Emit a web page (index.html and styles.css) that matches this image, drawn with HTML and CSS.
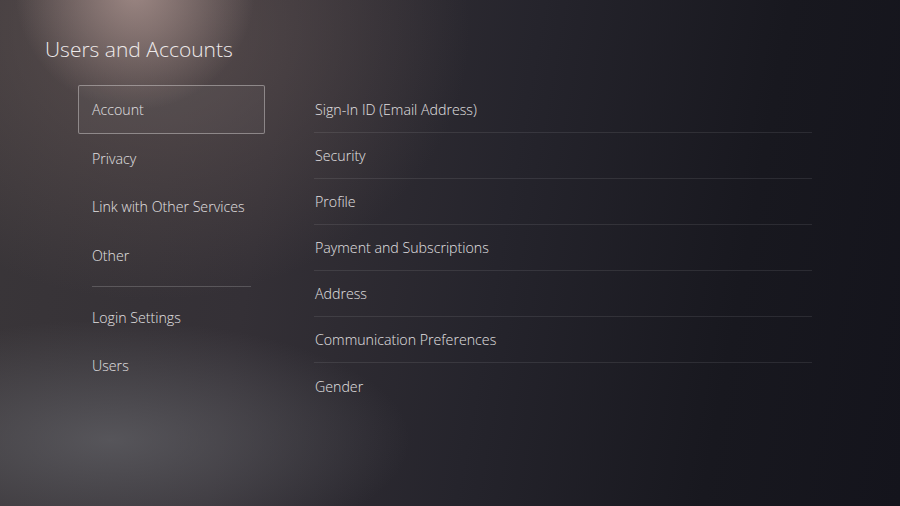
FILE: index.html
```html
<!DOCTYPE html>
<html lang="en">
<head>
<meta charset="utf-8">
<title>Users and Accounts</title>
<link rel="stylesheet" href="styles.css">
</head>
<body>
<div class="screen">
  <h1 class="title">Users and Accounts</h1>
  <div class="main">
    <nav class="side">
      <div class="side-item selected">Account</div>
      <div class="side-item">Privacy</div>
      <div class="side-item">Link with Other Services</div>
      <div class="side-item">Other</div>
      <div class="side-divider"></div>
      <div class="side-item">Login Settings</div>
      <div class="side-item">Users</div>
    </nav>
    <ul class="list">
      <li class="row">Sign-In ID (Email Address)</li>
      <li class="row">Security</li>
      <li class="row">Profile</li>
      <li class="row">Payment and Subscriptions</li>
      <li class="row">Address</li>
      <li class="row">Communication Preferences</li>
      <li class="row last">Gender</li>
    </ul>
  </div>
</div>
</body>
</html>
```

FILE: styles.css
```css
html, body {
  margin: 0;
  padding: 0;
  width: 900px;
  height: 506px;
  overflow: hidden;
}

body {
  font-family: "Open Sans", "Noto Sans", "Liberation Sans", sans-serif;
  color: #e2e0e2;
}

.screen {
  width: 900px;
  height: 506px;
  box-sizing: border-box;
  padding: 35px 0 0 45px;
  background:
    radial-gradient(ellipse 120px 120px at 135px -10px, rgba(180, 155, 150, 0.75), rgba(180, 155, 150, 0) 100%),
    radial-gradient(ellipse 320px 270px at 150px 30px, rgba(105, 90, 88, 0.65), rgba(105, 90, 88, 0) 100%),
    radial-gradient(ellipse 300px 120px at 110px 440px, rgba(100, 100, 105, 0.7), rgba(100, 100, 105, 0) 100%),
    linear-gradient(100deg, #3a3639 0%, #343036 30%, #25242c 55%, #18181f 80%, #14141c 100%);
}

.title {
  margin: 0;
  font-size: 21px;
  font-weight: 300;
  line-height: 28px;
  color: #eeeaea;
}

.main {
  display: flex;
  gap: 49px;
  margin-top: 22px;
  padding-left: 33px;
}

.side {
  width: 187px;
  display: flex;
  flex-direction: column;
}

.side-item {
  height: 48.7px;
  box-sizing: border-box;
  display: flex;
  align-items: center;
  padding-left: 13px;
  font-size: 14.2px;
  font-weight: 300;
  border: 1px solid transparent;
  border-radius: 2px;
}

.side-item.selected {
  border-color: rgba(220, 215, 215, 0.45);
  background: rgba(255, 255, 255, 0.04);
}

.side-divider {
  height: 1px;
  margin: 6px 14px 6px 14px;
  background: rgba(255, 255, 255, 0.18);
}

.list {
  list-style: none;
  margin: 2px 0 0 0;
  padding: 0;
  width: 498px;
}

.row {
  height: 46px;
  box-sizing: border-box;
  display: flex;
  align-items: center;
  padding-left: 1px;
  font-size: 14.2px;
  font-weight: 300;
  border-bottom: 1px solid rgba(255, 255, 255, 0.09);
}

.row.last {
  border-bottom: none;
}
```
